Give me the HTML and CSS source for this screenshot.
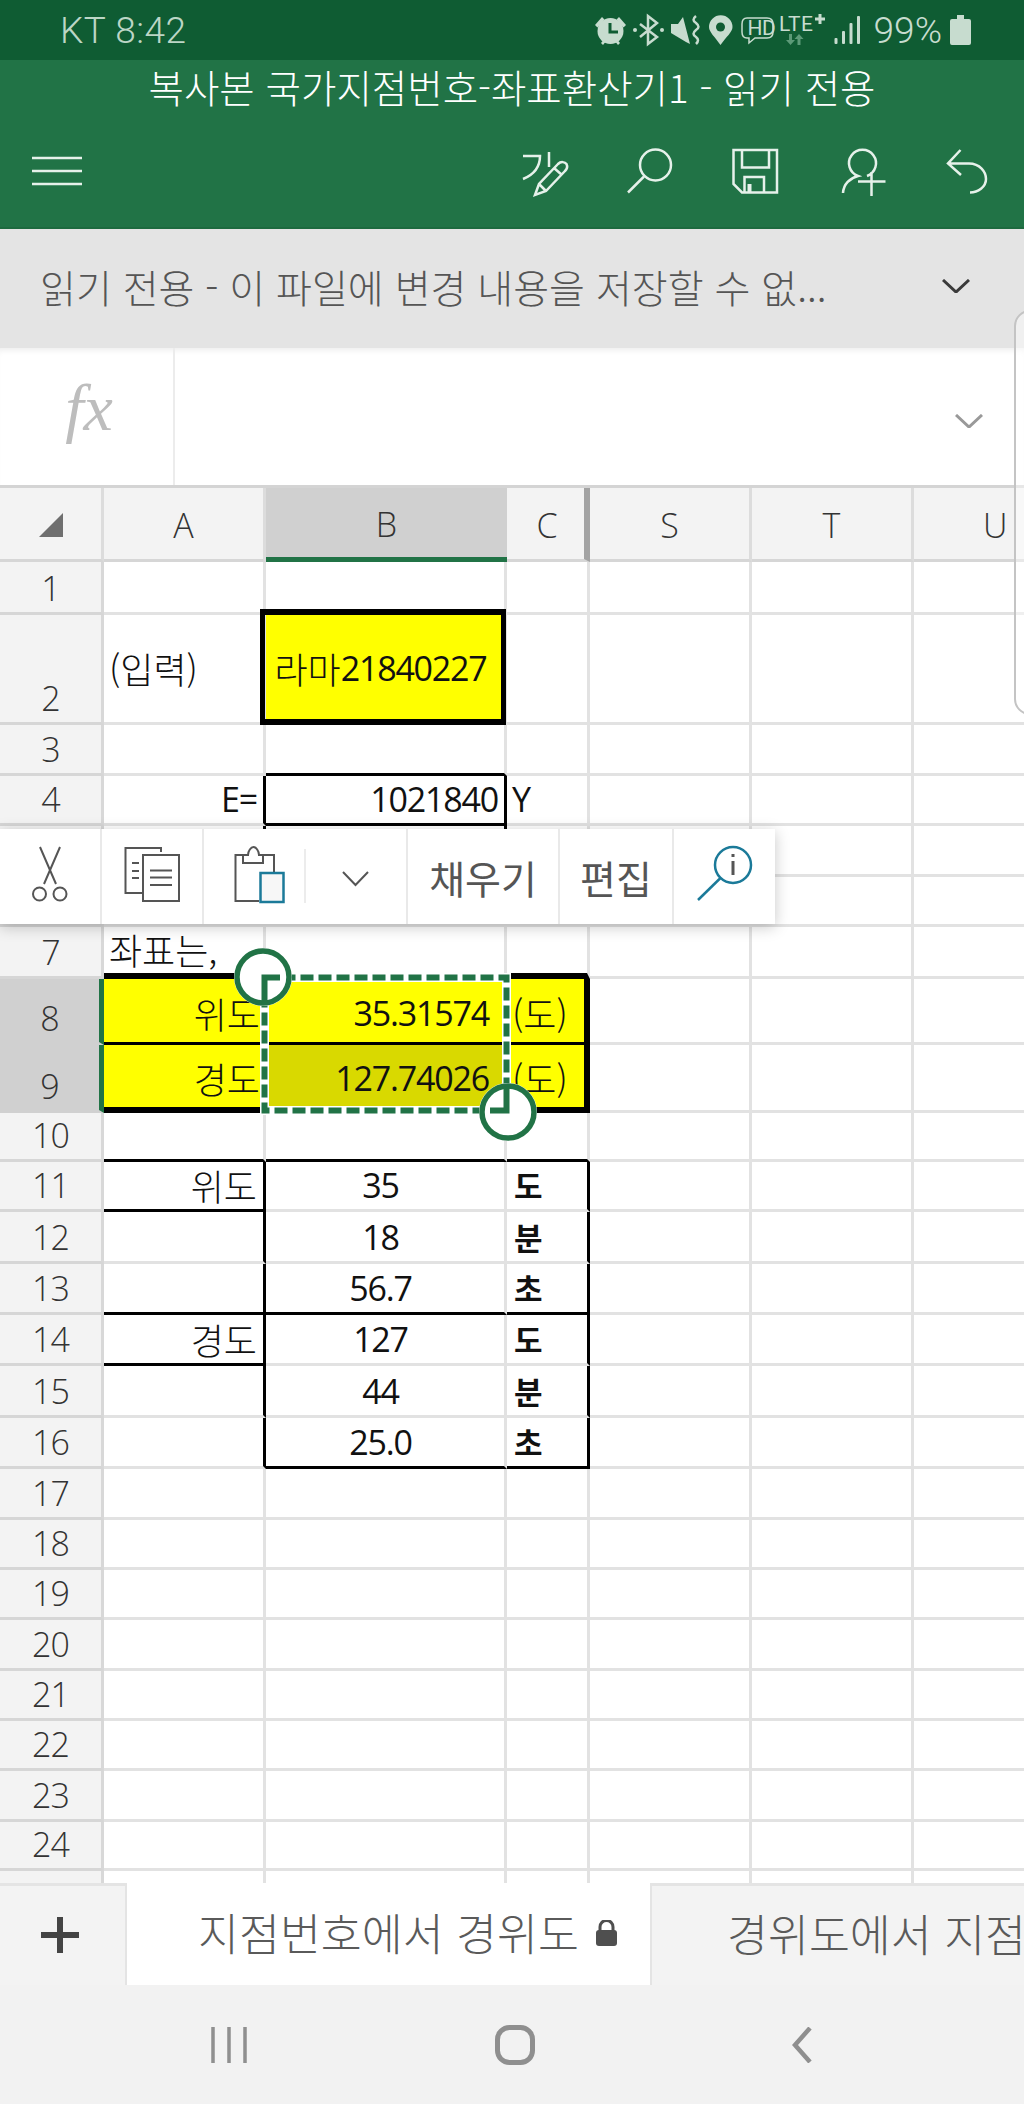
FILE: index.html
```html
<!DOCTYPE html>
<html lang="ko">
	<head>
		<meta charset="UTF-8" />
		<meta name="viewport" content="width=device-width, initial-scale=1.0" />
		<title>복사본 국가지점번호-좌표환산기1 - 읽기 전용</title>
		<link rel="stylesheet" href="styles.css">
	</head>
	<body>
		<div id="app">
			<div class="statusbar">
				<span class="status-left">KT 8:42</span>
				<div class="status-right">
					<svg class="status-icons" viewBox="590 8 280 44" width="280" height="44">
						<!-- alarm -->
						<path class="st-fill" d="M596 25 l7-8 2.5 2.5-7 8z M627 25 l-7-8-2.5 2.5 7 8z M602 43 l4-5 2 2-4 5z M621 43 l-4-5-2 2 4 5z"/>
						<circle class="st-fill" cx="611.5" cy="31" r="13"/>
						<path class="st-dark" d="M611 23 V32 H619"/>
						<!-- bluetooth -->
						<path class="st-line" d="M641 24 L658 37 L649 44 V16 L658 23 L641 37"/>
						<circle class="st-fill" cx="636" cy="30" r="2"/>
						<circle class="st-fill" cx="663" cy="30" r="2"/>
						<!-- mute -->
						<path class="st-fill" d="M672 24 H679 L684 17 L691 44 L687 42 L672 33z"/>
						<path class="st-line" d="M697 16 q-5 4 0 7 q5 4 0 7 q-5 4 0 7 q4 3 0 7"/>
						<!-- pin -->
						<path class="st-fill" d="M721.5 45 C716 37 710 32 710 27 A11.7 11.7 0 0 1 733.5 27 C733.5 32 727 37 721.5 45z"/>
						<circle class="st-bg" cx="721.5" cy="27" r="4.5"/>
						<!-- hd -->
						<path class="st-thin" d="M748 18 H768 Q774 18 774 24 V32 Q774 38 768 38 H756 L750 43 V38 H748 Q743 38 743 32 V24 Q743 18 748 18z"/>
						<text class="st-hd" x="748.5" y="35">HD</text>
						<!-- lte -->
						<text class="st-lte" x="780" y="31">LTE</text>
						<path class="st-line2" d="M821 14 V24 M816 19 H826"/>
						<path class="st-arrow" d="M790 34 h3 v6 h3 l-4.500 5 -4.500-5 h3z M800 34 l4.500 5 h-3 v6 h-3 v-6 h-3z"/>
						<!-- signal -->
						<rect class="st-fill" x="835.500" y="38" width="3" height="6" rx="1"/>
						<rect class="st-fill" x="843" y="31" width="3" height="13" rx="1"/>
						<rect class="st-fill" x="850.500" y="23" width="3" height="21" rx="1"/>
						<rect class="st-fill" x="858" y="16" width="3" height="28" rx="1"/>
					</svg>
					<span class="status-pct">99%</span>
					<svg class="status-batt" viewBox="0 0 21 30" width="21" height="30">
						<path class="st-fill" d="M7 0 H14 V4 H19 Q21 4 21 6 V28 Q21 30 19 30 H2 Q0 30 0 28 V6 Q0 4 2 4 H7z"/>
					</svg>
				</div>
			</div>

			<div class="titlebar">
				<div class="doc-title">복사본 국가지점번호-좌표환산기1 - 읽기 전용</div>
				<div class="toolbar">
					<svg class="menu-icon" viewBox="0 0 50 30" width="50" height="30">
						<path d="M0 2 H50 M0 15 H50 M0 28 H50"/>
					</svg>
					<div class="tools">
						<svg viewBox="516 141 60 60" width="60" height="60">
							<path d="M522 156 H539 C539 168 532 175 522 179 M548 152 V167"/>
							<path d="M534 195 L538 184 L557 164 C560 161 564 162 565.500 164 C567 167 566 169 564 171 L545 191z M538 184 L545 191 M553 168 L561 175"/>
						</svg>
						<svg viewBox="621 141 60 60" width="60" height="60">
							<circle cx="654.500" cy="165" r="15.500"/>
							<path d="M643 176.500 L627 192.500"/>
						</svg>
						<svg viewBox="726 141 60 60" width="60" height="60">
							<path d="M732.500 150 H776 V192.500 H741 L732.500 184z M741 150 V167.500 H768 V150 M743.500 192 V177 H763 V192"/>
							<rect class="tool-fill" x="746.500" y="184" width="4" height="8"/>
						</svg>
						<svg viewBox="831 141 60 60" width="60" height="60">
							<path d="M866 176 A13.500 13.500 0 1 0 857 176 C849 178 842.500 184 842 193 M857 181.500 H884.500 M870.500 172 V196"/>
						</svg>
						<svg viewBox="936 141 60 60" width="60" height="60">
							<path d="M959.500 150 L947 163.500 L960 175 M947 163.500 H968 C979 163.500 985 172 985 179 C985 187 977 192.500 969 192.500"/>
						</svg>
					</div>
				</div>
			</div>

			<div class="notice">
				<span class="notice-text">읽기 전용 - 이 파일에 변경 내용을 저장할 수 없...</span>
				<svg class="chev" viewBox="0 0 28 14" width="28" height="14"><path d="M1 1 L14 13 L27 1"/></svg>
			</div>

			<div class="formula">
				<div class="fx">fx</div>
				<div class="formula-input">
					<svg class="chev chev-light" viewBox="0 0 28 14" width="28" height="14"><path d="M1 1 L14 13 L27 1"/></svg>
				</div>
			</div>

			<div class="sheet-wrap">
				<div class="sheet">
					<div class="c ch corner"><svg viewBox="0 0 24 24" width="24" height="24"><path d="M0 24 L24 0 V24z"/></svg></div>
					<div class="c ch">A</div><div class="c ch ch-on">B</div><div class="c ch ch-c">C</div><div class="c ch">S</div><div class="c ch">T</div><div class="c ch ch-u">U</div>

					<div class="c rh">1</div><div class="c"></div><div class="c"></div><div class="c"></div><div class="c"></div><div class="c"></div><div class="c"></div>

					<div class="c rh">2</div><div class="c mid"><span class="ko">(입력)</span></div><div class="c mid input-cell"><span class="ko">라마</span>21840227</div><div class="c"></div><div class="c"></div><div class="c"></div><div class="c"></div>

					<div class="c rh">3</div><div class="c"></div><div class="c kb"></div><div class="c"></div><div class="c"></div><div class="c"></div><div class="c"></div>

					<div class="c rh">4</div><div class="c end kr">E=</div><div class="c end kb kr">1021840</div><div class="c">Y</div><div class="c"></div><div class="c"></div><div class="c"></div>

					<div class="c rh">5</div><div class="c kr"></div><div class="c kr"></div><div class="c"></div><div class="c"></div><div class="c"></div><div class="c"></div>

					<div class="c rh">6</div><div class="c"></div><div class="c"></div><div class="c"></div><div class="c"></div><div class="c"></div><div class="c"></div>

					<div class="c rh">7</div><div class="c kb-6"><span class="ko">좌표는,</span></div><div class="c kb-6"></div><div class="c kb-6"></div><div class="c"></div><div class="c"></div><div class="c"></div>

					<div class="c rh rh-on">8</div><div class="c end yl kb no-r"><span class="ko">위도</span></div><div class="c end yl sel-val kb no-r">35.31574</div><div class="c yl kb kr-6"><span class="ko">(도)</span></div><div class="c"></div><div class="c"></div><div class="c"></div>

					<div class="c rh rh-on">9</div><div class="c end yl kb-6 no-r"><span class="ko">경도</span></div><div class="c end yl yl-dim sel-val kb-6 no-r">127.74026</div><div class="c yl kb-6 kr-6"><span class="ko">(도)</span></div><div class="c"></div><div class="c"></div><div class="c"></div>

					<div class="c rh">10</div><div class="c kb"></div><div class="c kb"></div><div class="c kb"></div><div class="c"></div><div class="c"></div><div class="c"></div>

					<div class="c rh">11</div><div class="c end kb kr"><span class="ko">위도</span></div><div class="c ctr">35</div><div class="c kr unit">도</div><div class="c"></div><div class="c"></div><div class="c"></div>

					<div class="c rh">12</div><div class="c kr"></div><div class="c ctr">18</div><div class="c kr unit">분</div><div class="c"></div><div class="c"></div><div class="c"></div>

					<div class="c rh">13</div><div class="c kb kr"></div><div class="c ctr kb">56.7</div><div class="c kb kr unit">초</div><div class="c"></div><div class="c"></div><div class="c"></div>

					<div class="c rh">14</div><div class="c end kb kr"><span class="ko">경도</span></div><div class="c ctr">127</div><div class="c kr unit">도</div><div class="c"></div><div class="c"></div><div class="c"></div>

					<div class="c rh">15</div><div class="c kr"></div><div class="c ctr">44</div><div class="c kr unit">분</div><div class="c"></div><div class="c"></div><div class="c"></div>

					<div class="c rh">16</div><div class="c kr"></div><div class="c ctr kb">25.0</div><div class="c kb kr unit">초</div><div class="c"></div><div class="c"></div><div class="c"></div>

					<div class="c rh">17</div><div class="c"></div><div class="c"></div><div class="c"></div><div class="c"></div><div class="c"></div><div class="c"></div>
					<div class="c rh">18</div><div class="c"></div><div class="c"></div><div class="c"></div><div class="c"></div><div class="c"></div><div class="c"></div>
					<div class="c rh">19</div><div class="c"></div><div class="c"></div><div class="c"></div><div class="c"></div><div class="c"></div><div class="c"></div>
					<div class="c rh">20</div><div class="c"></div><div class="c"></div><div class="c"></div><div class="c"></div><div class="c"></div><div class="c"></div>
					<div class="c rh">21</div><div class="c"></div><div class="c"></div><div class="c"></div><div class="c"></div><div class="c"></div><div class="c"></div>
					<div class="c rh">22</div><div class="c"></div><div class="c"></div><div class="c"></div><div class="c"></div><div class="c"></div><div class="c"></div>
					<div class="c rh">23</div><div class="c"></div><div class="c"></div><div class="c"></div><div class="c"></div><div class="c"></div><div class="c"></div>
					<div class="c rh">24</div><div class="c"></div><div class="c"></div><div class="c"></div><div class="c"></div><div class="c"></div><div class="c"></div>
					<div class="c rh"></div><div class="c"></div><div class="c"></div><div class="c"></div><div class="c"></div><div class="c"></div><div class="c"></div>
				</div>

				<!-- selection and its two drag handles -->
				<svg class="selection" viewBox="225 940 325 210" width="325" height="210">
					<rect class="sel-under" x="264.500" y="977.500" width="242" height="133"/>
					<rect class="sel-dash" x="264.500" y="977.500" width="242" height="133"/>
					<circle class="sel-halo" cx="263" cy="977" r="27"/>
					<circle class="sel-halo" cx="508" cy="1112" r="27"/>
					<circle class="sel-ring" cx="263" cy="977" r="26"/>
					<circle class="sel-ring" cx="508" cy="1112" r="26"/>
					<path class="sel-corner" d="M280 977.500 H264.500 V1005"/>
					<path class="sel-corner" d="M506.500 1088 V1110.500 H490"/>
				</svg>

				<div class="ctx-menu">
					<div class="ctx-item ctx-cut">
						<svg viewBox="0 0 102 95" width="102" height="95">
							<path d="M40 18 L56 55 M60 18 L44 55"/>
							<circle cx="39.500" cy="65" r="6.500"/>
							<circle cx="60" cy="65" r="6.500"/>
						</svg>
					</div>
					<div class="ctx-item ctx-copy">
						<svg viewBox="102 0 103 95" width="103" height="95">
							<path d="M161 23 V19 H125.500 V64 H142 M132 34 H139 M132 42 H139 M132 49 H139"/>
							<rect x="143" y="26" width="36" height="46"/>
							<path d="M150 41.500 H172 M150 48.500 H172 M150 56 H172"/>
						</svg>
					</div>
					<div class="ctx-item ctx-paste">
						<svg viewBox="204 0 204 95" width="204" height="95">
							<path d="M259 72 H235.500 V26 H243 M263 26 H274 V50"/>
							<path d="M243 34 V26 H248 C248 22 251 18 253.500 18 C256 18 259 22 259 26 H263 V34z"/>
							<rect class="ic-blue" x="260.500" y="44" width="23" height="29"/>
							<path class="ic-sep" d="M305 20 V74"/>
							<path d="M343 43 L355.500 56 L368 43"/>
						</svg>
					</div>
					<div class="ctx-item ctx-text ctx-fill">채우기</div>
					<div class="ctx-item ctx-text ctx-edit">편집</div>
					<div class="ctx-item ctx-look">
						<svg viewBox="674 0 101 95" width="101" height="95">
							<circle class="ic-blue" cx="733" cy="36" r="18"/>
							<path class="ic-blue" d="M720.500 49 L698 71"/>
							<path class="ic-i" d="M733 32 V46 M733 25 V28"/>
						</svg>
					</div>
				</div>
			</div>

			<div class="tabbar">
				<div class="add-sheet">
					<svg viewBox="0 0 38 36" width="38" height="36"><path d="M19 0 V36 M0 18 H38"/></svg>
				</div>
				<div class="tab tab-on">
					<span>지점번호에서 경위도</span>
					<svg viewBox="0 0 21 26" width="21" height="26"><path d="M4 11 V7 A6.500 6.500 0 0 1 17 7 V11" class="lock-bow"/><rect y="10" width="21" height="16" rx="3"/></svg>
				</div>
				<div class="tab">경위도에서 지점</div>
			</div>

			<div class="navbar">
				<svg viewBox="0 0 36 36" width="36" height="36" class="nav-recents"><path d="M2 0 V36 M18 0 V36 M34 0 V36"/></svg>
				<svg viewBox="0 0 40 40" width="40" height="40" class="nav-home"><rect x="2.500" y="2.500" width="35" height="35" rx="12"/></svg>
				<svg viewBox="0 0 20 36" width="20" height="36" class="nav-back"><path d="M18 1 L3 18 L18 35"/></svg>
			</div>

			<div class="edge-panel"></div>
		</div>
	</body>
</html>
```

FILE: styles.css
```css
* {
	margin: 0;
	padding: 0;
	box-sizing: border-box;
}

html, body {
	width: 1024px;
	height: 2104px;
	overflow: hidden;
}

body {
	font-family: "Open Sans", "Noto Sans CJK KR", sans-serif;
	background-color: #fff;
}

svg {
	display: block;
	flex: none;
}

#app {
	position: relative;
	width: 1024px;
	height: 2104px;
	overflow: hidden;
	display: flex;
	flex-direction: column;
}

/* status bar */
.statusbar {
	height: 60px;
	background-color: #0f5c33;
	color: #bcd6c6;
	display: flex;
	align-items: center;
	justify-content: space-between;
	padding: 0 53px 0 60px;
}

.status-left {
	font-family: Roboto, sans-serif;
	font-size: 37px;
	font-weight: 300;
	letter-spacing: 0.5px;
}

.status-right {
	display: flex;
	align-items: center;
}

.status-pct {
	font-family: Roboto, sans-serif;
	font-size: 37px;
	font-weight: 300;
	margin: 0 8px 0 5px;
	color: #c7dccf;
}

.status-batt {
	margin-top: -1px;
}

.st-fill { fill: #c7dccf; }
.st-bg { fill: #0f5c33; }
.st-dark { fill: none; stroke: #0f5c33; stroke-width: 3; }
.st-line { fill: none; stroke: #c7dccf; stroke-width: 2.5; }
.st-line2 { fill: none; stroke: #c7dccf; stroke-width: 3; }
.st-thin { fill: none; stroke: #c7dccf; stroke-width: 1.5; }
.st-arrow { fill: #5c9a78; }
.st-hd {
	font-family: Roboto, sans-serif;
	font-size: 21px;
	fill: #c7dccf;
	letter-spacing: -0.5px;
}
.st-lte {
	font-family: Roboto, sans-serif;
	font-size: 21px;
	fill: #c7dccf;
	letter-spacing: 0.5px;
}

/* title + toolbar */
.titlebar {
	height: 169px;
	background-color: #217346;
	border-bottom: 2px solid #1d6a3f;
}

.doc-title {
	height: 56px;
	color: #fff;
	font-family: "Noto Sans CJK KR", sans-serif;
	font-size: 38.500px;
	font-weight: 300;
	line-height: 53px;
	text-align: center;
}

.toolbar {
	height: 60px;
	margin-top: 25px;
	display: flex;
	align-items: center;
	justify-content: space-between;
	padding: 0 6px 0 32px;
}

.toolbar svg {
	fill: none;
	stroke: #e6f1ea;
	stroke-width: 2.5;
}

.tools {
	display: flex;
	gap: 45px;
	padding-right: 21px;
}

.toolbar .tool-fill {
	fill: #e6f1ea;
	stroke: none;
}

/* read only notice */
.notice {
	height: 119px;
	background-color: #e4e4e4;
	color: #555;
	display: flex;
	align-items: center;
	justify-content: space-between;
	padding: 0 54px 6px 40px;
}

.notice-text {
	font-family: "Noto Sans CJK KR", sans-serif;
	font-size: 39px;
	font-weight: 300;
}

.chev {
	fill: none;
	stroke: #3a3a3a;
	stroke-width: 3;
}

.chev-light {
	stroke: #999;
}

/* formula bar */
.formula {
	height: 137px;
	display: flex;
	box-shadow: inset 0 6px 6px -4px #ececec;
}

.fx {
	width: 175px;
	border-right: 2px solid #ececec;
	font-family: "Liberation Serif", serif;
	font-style: italic;
	font-size: 66px;
	color: #bdbdbd;
	text-align: center;
	padding: 30px 0 0 5px;
	line-height: 60px;
}

.formula-input {
	flex: 1;
	display: flex;
	justify-content: flex-end;
	align-items: center;
	padding: 8px 41px 0 0;
}

/* grid */
.sheet-wrap {
	position: relative;
	height: 1398px;
	border-top: 3px solid #d4d4d4;
}

.sheet {
	display: grid;
	height: 100%;
	overflow: hidden;
	grid-template-columns: 104px 162px 241px 83px 162px 162px 162px;
	grid-template-rows: 74px 53px 110px 51px 50px 51px 50px 52px 66px 68px 49px 50px 52px 51px 51px 52px 51px 51px 50px 50px 51px 50px 50px 51px 49px 80px;
	font-size: 34px;
	letter-spacing: -1.2px;
	color: #111;
}

.c {
	display: flex;
	align-items: flex-end;
	padding: 0 6px 1px 5px;
	line-height: 46px;
	border-right: 3px solid #e2e2e2;
	border-bottom: 3px solid #e2e2e2;
	white-space: nowrap;
	min-width: 0;
}

.ko {
	font-family: "Noto Sans CJK KR", sans-serif;
	font-size: 36px;
	font-weight: 300;
	letter-spacing: 0;
}

.mid { align-items: center; }
.end { justify-content: flex-end; }
.ctr { justify-content: center; padding-right: 14px; }

.unit {
	font-family: "Noto Sans CJK KR", sans-serif;
	font-size: 31px;
	font-weight: 700;
	letter-spacing: 0;
	padding-left: 7px;
}

/* column and row headers */
.ch {
	background-color: #f3f3f3;
	align-items: center;
	justify-content: center;
	font-weight: 300;
	color: #333;
	border-bottom-color: #d6d6d6;
	border-right-color: #dcdcdc;
	padding: 3px 0 0;
	letter-spacing: 0;
}

.corner svg { fill: #6f6f6f; margin-top: -1px; }
.ch-on {
	background-color: #d0d0d0;
	border-bottom: 5px solid #217346;
	border-right: 0;
}
.ch-c { border-right: 6px solid #a3a3a3; padding-left: 3px; }
.ch-u { justify-content: flex-start; padding-left: 69px; }

.rh {
	background-color: #f3f3f3;
	justify-content: center;
	font-weight: 300;
	color: #333;
	border-bottom-color: #d6d6d6;
	border-right-color: #d8d8d8;
	padding: 0 0 1px;
	letter-spacing: -1px;
}

.rh-on {
	background-color: #d0d0d0;
	border-right: 5px solid #217346;
	border-bottom-color: #d0d0d0;
}

.kb { border-bottom-color: #000; }
.kr { border-right-color: #000; }
.kb-6 { border-bottom: 6px solid #000; }
.kr-6 { border-right: 6px solid #000; }
.no-r { border-right: 0; }
.yl { background-color: #ff0; padding-bottom: 6px; }
.yl-dim { background-color: #d9d900; }
.sel-val { padding-right: 18px; }

.input-cell {
	position: relative;
	background-color: #ff0;
	justify-content: center;
	padding-right: 14px;
}

.input-cell::after {
	content: "";
	position: absolute;
	top: -6px;
	right: -2px;
	bottom: -3px;
	left: -6px;
	border: 5px solid #000;
	border-top-width: 6px;
	border-bottom-width: 6px;
}

/* selection overlay: placed in page coordinates through its viewBox */
.selection {
	position: absolute;
	left: 225px;
	top: 452px;
	overflow: visible;
}

.sel-under { fill: none; stroke: #fff; stroke-width: 9; }
.sel-dash { fill: none; stroke: #217346; stroke-width: 6; stroke-dasharray: 13 5; }
.sel-halo { fill: #fff; stroke: #fff; stroke-width: 4; }
.sel-ring { fill: #fff; stroke: #217346; stroke-width: 5.5; }
.sel-corner { fill: none; stroke: #217346; stroke-width: 6; }

/* context menu */
.ctx-menu {
	position: absolute;
	left: 0;
	top: 341px;
	width: 775px;
	height: 95px;
	background-color: #fff;
	display: flex;
	box-shadow: 0 3px 14px rgba(0, 0, 0, 0.22);
}

.ctx-item {
	border-right: 2px solid #e9e9e9;
	flex: none;
}

.ctx-item svg {
	fill: none;
	stroke: #555;
	stroke-width: 2;
}

.ctx-cut { width: 102px; }
.ctx-copy { width: 102px; }
.ctx-paste { width: 204px; }
.ctx-fill { width: 152px; }
.ctx-edit { width: 114px; }
.ctx-look { width: 101px; border-right: 0; }

.ctx-item svg .ic-blue { stroke: #1b7a99; stroke-width: 2.5; fill: #f7f7f7; }
.ctx-look svg .ic-blue { fill: none; }
.ctx-item svg .ic-sep { stroke: #ececec; }
.ctx-item svg .ic-i { stroke-width: 3; }

.ctx-text {
	font-family: "Noto Sans CJK KR", sans-serif;
	font-size: 39px;
	color: #555;
	display: flex;
	align-items: center;
	justify-content: center;
}

/* sheet tabs */
.tabbar {
	height: 102px;
	background-color: #f3f3f3;
	border-top: 3px solid #e4e4e4;
	display: flex;
	font-family: "Noto Sans CJK KR", sans-serif;
	font-size: 44.500px;
	font-weight: 300;
	color: #555;
	white-space: nowrap;
}

.add-sheet {
	flex: none;
	width: 125px;
	display: flex;
	align-items: center;
	justify-content: center;
	padding: 0 5px 2px 0;
}

.add-sheet svg {
	fill: none;
	stroke: #444;
	stroke-width: 6;
}

.tab {
	flex: none;
	display: flex;
	align-items: center;
	padding-left: 75px;
	padding-bottom: 6px;
	color: #5a5a5a;
}

.tab-on {
	width: 527px;
	padding-left: 71px;
	margin-top: -3px;
	background-color: #fff;
	border-left: 2px solid #e4e4e4;
	border-right: 2px solid #e4e4e4;
	gap: 17px;
}

.tab-on svg {
	fill: #4f4f4f;
	margin-top: 4px;
}

.tab-on .lock-bow {
	fill: none;
	stroke: #4f4f4f;
	stroke-width: 3;
}

/* android nav */
.navbar {
	height: 119px;
	background-color: #f2f2f2;
	display: grid;
	grid-template-columns: 458px 80px 1fr;
	align-items: center;
}

.navbar svg {
	fill: none;
	stroke: #8f8f8f;
}

.nav-recents { stroke-width: 3.5; margin-left: 211px; }
.nav-home { stroke-width: 5; margin-left: 37px; }
.nav-back { stroke-width: 4.5; margin-left: 254px; }

/* edge panel handle */
.edge-panel {
	position: absolute;
	left: 1014px;
	top: 310px;
	width: 30px;
	height: 405px;
	border: 2px solid #c4c4c4;
	border-radius: 16px 0 0 16px;
	background-color: rgba(255, 255, 255, 0.45);
}
```
